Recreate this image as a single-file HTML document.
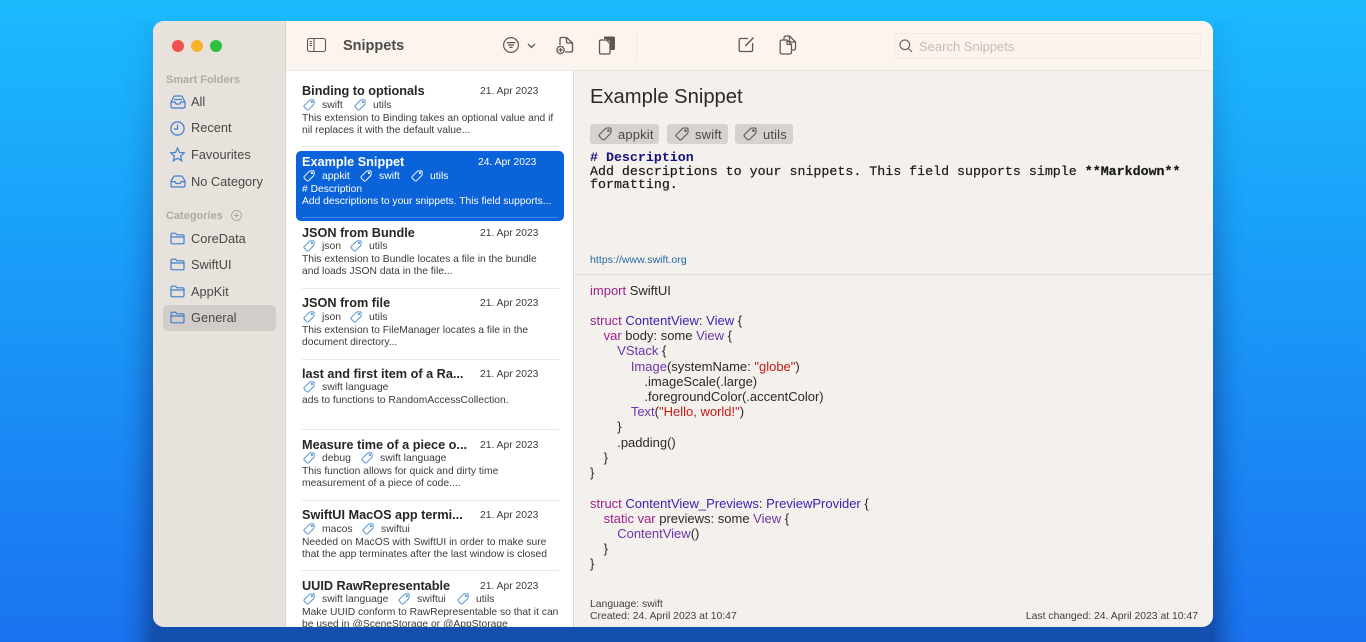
<!DOCTYPE html>
<html><head><meta charset="utf-8"><style>
*{box-sizing:border-box}
html,body{margin:0;padding:0;width:1366px;height:642px;overflow:hidden}
body{position:relative;background:linear-gradient(180deg,#1bbafd 0%,#1a9af8 45%,#1a72f0 100%);font-family:"Liberation Sans",sans-serif;color:#2b2b2b}
.t{position:absolute;white-space:nowrap;line-height:1}
#w{position:absolute;left:153px;top:21px;width:1060px;height:606px;border-radius:11px;overflow:hidden;background:#f4f0ec}
.sd{position:absolute;top:21px;height:621px;width:32px;-webkit-mask-image:linear-gradient(180deg,rgba(0,0,0,.1) 0,rgba(0,0,0,.6) 45%,#000 100%);mask-image:linear-gradient(180deg,rgba(0,0,0,.1) 0,rgba(0,0,0,.6) 45%,#000 100%)}
svg{position:absolute;overflow:visible}
#side{position:absolute;left:0;top:0;width:133px;height:606px;background:#e7e2dc;border-right:1px solid #d8d4cf}
#bar{position:absolute;left:133px;top:0;width:927px;height:49.5px;background:#fcf4ef;border-bottom:1px solid #e9e5e1}
#list{position:absolute;left:133px;top:50px;width:288px;height:556px;background:#fff;border-right:1px solid #dcd8d4;overflow:hidden}
.s{font-size:12.8px;color:#4a4744}
.h{font-size:11px;font-weight:bold;color:#aeaaa5}
.i{fill:none;stroke:#3f7fd0;stroke-width:1.2}
.ti{font-size:12.7px;font-weight:bold;color:#262626}
.da{font-size:10.3px;color:#3b3b3b;top:16px}
.ta{font-size:10.4px;color:#3d3d3d;top:29.5px}
.de{font-size:10.3px;color:#3b3b3b}
.d1{top:42.5px}.d2{top:54.7px}
.ln{position:absolute;left:16px;width:257px;height:1px;background:#e8e8e8}
.tg{fill:none;stroke:#4b8ed2;stroke-width:1.1;top:27.5px}
.wh .ti,.wh .da,.wh .ta,.wh .de{color:#fff}
.wh .tg{stroke:#fff}
.c{position:absolute;left:437px;white-space:pre;tab-size:13.6px;font-size:13px;line-height:15.22px;color:#2a2a2a}
.k{color:#9b2393}.y{color:#3a1fb0}.p{color:#6c36a9}.r{color:#c41a16}
.pill{position:absolute;top:103px;height:20px;background:#d6d2ce;border-radius:3px}
.pt{font-size:13px;color:#4a4744;letter-spacing:.15px}
.pi{fill:none;stroke:#555;stroke-width:1.1}
.b{fill:none;stroke:#5c5753;stroke-width:1.3}
.m{position:absolute;left:437px;font-family:"Liberation Mono",monospace;font-size:13.3px;white-space:pre;line-height:1;color:#1a1a1a;-webkit-text-stroke:.2px #1a1a1a}
.f{font-size:10.4px;color:#3f3f3f}
</style></head><body>
<svg width="0" height="0" style="position:absolute"><defs>
<symbol id="tag" viewBox="0 0 14 14"><path d="M1.5 7.5 7 2Q8 1 9 1H12Q13 1 13 2V5Q13 6 12 7L6.5 12.5Q5.5 13.5 4.5 12.5L1.5 9.5Q.5 8.5 1.5 7.5Z"/><circle cx="10.4" cy="3.6" r=".7"/></symbol>
<symbol id="fold" viewBox="0 0 15 13"><path d="M1 3Q1 1.2 2.5 1.2H5.4L7 2.8H12.6Q14 2.8 14 4.2V10.4Q14 11.8 12.6 11.8H2.4Q1 11.8 1 10.4ZM1 5H14"/></symbol>
</defs></svg>
<div style="position:absolute;left:153px;top:620px;width:1060px;height:22px;background:rgba(14,50,120,.55)"></div>
<div class="sd" style="left:1213px;background:linear-gradient(90deg,rgba(14,50,120,.55),rgba(14,50,120,.38) 20%,rgba(14,50,120,.2) 45%,rgba(14,50,120,.07) 70%,rgba(14,50,120,0))"></div>
<div class="sd" style="left:121px;background:linear-gradient(270deg,rgba(14,50,120,.55),rgba(14,50,120,.38) 20%,rgba(14,50,120,.2) 45%,rgba(14,50,120,.07) 70%,rgba(14,50,120,0))"></div>
<div id="w">
<div id="side">
<div style="position:absolute;left:18.5px;top:18.5px;width:12px;height:12px;border-radius:50%;background:#f2504c"></div>
<div style="position:absolute;left:37.5px;top:18.5px;width:12px;height:12px;border-radius:50%;background:#f8b22c"></div>
<div style="position:absolute;left:56.5px;top:18.5px;width:12px;height:12px;border-radius:50%;background:#2fc13e"></div>
<div class="t h" style="left:13px;top:53.5px">Smart Folders</div>
<svg class="i" style="left:17px;top:74px" width="16" height="14" viewBox="0 0 16 14"><path d="M1 7 3.6 2Q4 1 5 1H11Q12 1 12.4 2L15 7V11.4Q15 13 13.4 13H2.6Q1 13 1 11.4ZM1 7H5L6 9H10L11 7H15M4 4.5H12"/></svg>
<div class="t s" style="left:38px;top:74.5px">All</div>
<svg class="i" style="left:17px;top:100px" width="15" height="15" viewBox="0 0 15 15"><circle cx="7.5" cy="7.5" r="6.6"/><path d="M7.5 3.5V8H4"/></svg>
<div class="t s" style="left:38px;top:101px">Recent</div>
<svg class="i" style="left:17px;top:126px" width="15" height="15" viewBox="0 0 15 15"><path d="M7.5 1 9.4 5.4 14.2 5.8 10.6 9 11.7 13.8 7.5 11.2 3.3 13.8 4.4 9 .8 5.8 5.6 5.4Z"/></svg>
<div class="t s" style="left:38px;top:127.5px">Favourites</div>
<svg class="i" style="left:17px;top:154px" width="16" height="13" viewBox="0 0 16 13"><path d="M1 6 3.6 1.8Q4 1 5 1H11Q12 1 12.4 1.8L15 6V10.4Q15 12 13.4 12H2.6Q1 12 1 10.4ZM1 6.6H5L6 8.5H10L11 6.6H15"/></svg>
<div class="t s" style="left:38px;top:154.5px">No Category</div>
<div class="t h" style="left:13px;top:189.5px">Categories</div>
<svg style="left:78px;top:189px;fill:none;stroke:#aeaaa5;stroke-width:1" width="11" height="11" viewBox="0 0 11 11"><circle cx="5.5" cy="5.5" r="5"/><path d="M5.5 3V8M3 5.5H8"/></svg>
<svg class="i" style="left:17px;top:211px" width="15" height="13"><use href="#fold"/></svg>
<div class="t s" style="left:38px;top:211.5px">CoreData</div>
<svg class="i" style="left:17px;top:237px" width="15" height="13"><use href="#fold"/></svg>
<div class="t s" style="left:38px;top:238px">SwiftUI</div>
<svg class="i" style="left:17px;top:264px" width="15" height="13"><use href="#fold"/></svg>
<div class="t s" style="left:38px;top:264.5px">AppKit</div>
<div style="position:absolute;left:9.5px;top:284px;width:113.5px;height:26px;border-radius:5px;background:#d2cdc8"></div>
<svg class="i" style="left:17px;top:290px" width="15" height="13"><use href="#fold"/></svg>
<div class="t s" style="left:38px;top:291px">General</div>
</div>

<div id="bar">
<svg class="b" style="left:21px;top:17px;stroke-width:1.1" width="19" height="14" viewBox="0 0 19 14"><rect x=".5" y=".5" width="18" height="13" rx="2"/><path d="M7 .5V13.5M2.5 3.5H5M2.5 5.5H5M2.5 7.5H5"/></svg>
<div class="t" style="left:57px;top:17.5px;font-size:14.5px;font-weight:bold;color:#4e4a47">Snippets</div>
<svg class="b" style="left:217px;top:16px;stroke-width:1.2" width="16" height="16" viewBox="0 0 16 16"><circle cx="8" cy="8" r="7.4"/><path d="M3.8 5.6H12.2M5 8H11M6.4 10.4H9.6"/></svg>
<svg class="b" style="left:241px;top:21.5px" width="9" height="6" viewBox="0 0 9 6"><path d="M1 1 4.5 4.5 8 1"/></svg>
<svg class="b" style="left:270px;top:15px;stroke-width:1.3" width="18" height="19" viewBox="0 0 18 19"><path d="M4 9V3Q4 1.5 5.5 1.5H10.5L16.5 7V14.5Q16.5 16 15 16H9M10.5 1.5V5.5Q10.5 7 12 7H16.5"/><circle cx="4.5" cy="14" r="3.6"/><path d="M4.5 12V16M2.5 14H6.5"/></svg>
<svg style="left:312px;top:14px" width="18" height="20" viewBox="0 0 18 20"><path d="M6 1.5H15.4Q17 1.5 17 3V13.5Q17 15 15.5 15H12V6.5L8 4H6Z" fill="#5c5753"/><path d="M3 5H8.5L12 8.5V17.4Q12 19 10.4 19H3Q1.5 19 1.5 17.4V6.5Q1.5 5 3 5Z" fill="#fcf4ef" stroke="#5c5753" stroke-width="1.3"/></svg>
<div style="position:absolute;left:350px;top:11px;width:1px;height:27px;background:#efe9e4"></div>
<svg class="b" style="left:452px;top:15px" width="18" height="17" viewBox="0 0 18 17"><path d="M10 2.5H3Q1.2 2.5 1.2 4V14Q1.2 15.5 3 15.5H13Q14.6 15.5 14.6 14V7"/><path d="M7.5 10 15.5 1.5" stroke-width="1.4"/></svg>
<svg class="b" style="left:493px;top:14px;stroke-width:1.25" width="18" height="20" viewBox="0 0 18 20"><path d="M5 5V3Q5 1 7 1H10.5L16.5 7V13Q16.5 15 14.5 15H12.5M10.5 1V5.5Q10.5 7 12 7H16.5"/><path d="M3 5H8L12.5 9.5V17Q12.5 19 10.5 19H3Q1.2 19 1.2 17V7Q1.2 5 3 5ZM8 5V8.2Q8 9.5 9.3 9.5H12.5"/></svg>
<div style="position:absolute;left:608px;top:11.5px;width:307px;height:26px;border:1px solid #f0e9e4;border-radius:4px;background:#fbf3ee"></div>
<svg style="left:613px;top:17.5px;fill:none;stroke:#6e6a67;stroke-width:1.2" width="14" height="14" viewBox="0 0 14 14"><circle cx="5.8" cy="5.8" r="4.8"/><path d="M9.4 9.4 13 13"/></svg>
<div class="t" style="left:633px;top:19px;font-size:13px;color:#c2bdb9">Search Snippets</div>
</div>

<div id="list">
<div style="position:absolute;left:10px;top:79.5px;width:268px;height:70.5px;background:#0a63d8;border-radius:5px"></div>
<div class="ln" style="top:75px"></div>
<div class="ln" style="top:217px"></div><div class="ln" style="top:287.5px"></div><div class="ln" style="top:358px"></div><div class="ln" style="top:428.5px"></div><div class="ln" style="top:499px"></div>
<div class="ln" style="top:146px;left:16px;width:256px;background:#3d85e4"></div>

<div style="position:absolute;left:0;top:0;width:288px;height:71px">
<div class="t ti" style="left:16px;top:14px">Binding to optionals</div><div class="t da" style="left:194px">21. Apr 2023</div>
<svg class="tg" style="left:17px" width="12" height="12"><use href="#tag"/></svg><div class="t ta" style="left:36px">swift</div>
<svg class="tg" style="left:68px" width="12" height="12"><use href="#tag"/></svg><div class="t ta" style="left:87px">utils</div>
<div class="t de d1" style="left:16px">This extension to Binding takes an optional value and if</div><div class="t de d2" style="left:16px">nil replaces it with the default value...</div>
</div>
<div class="wh" style="position:absolute;left:0;top:71px;width:288px;height:71px">
<div class="t ti" style="left:16px;top:13.5px">Example Snippet</div><div class="t da" style="left:192px">24. Apr 2023</div>
<svg class="tg" style="left:17px" width="12" height="12"><use href="#tag"/></svg><div class="t ta" style="left:36px">appkit</div>
<svg class="tg" style="left:74px" width="12" height="12"><use href="#tag"/></svg><div class="t ta" style="left:93px">swift</div>
<svg class="tg" style="left:125px" width="12" height="12"><use href="#tag"/></svg><div class="t ta" style="left:144px">utils</div>
<div class="t de d1" style="left:16px"># Description</div><div class="t de d2" style="left:16px">Add descriptions to your snippets. This field supports...</div>
</div>
<div style="position:absolute;left:0;top:141.5px;width:288px;height:71px">
<div class="t ti" style="left:16px;top:14px">JSON from Bundle</div><div class="t da" style="left:194px">21. Apr 2023</div>
<svg class="tg" style="left:17px" width="12" height="12"><use href="#tag"/></svg><div class="t ta" style="left:36px">json</div>
<svg class="tg" style="left:64px" width="12" height="12"><use href="#tag"/></svg><div class="t ta" style="left:83px">utils</div>
<div class="t de d1" style="left:16px">This extension to Bundle locates a file in the bundle</div><div class="t de d2" style="left:16px">and loads JSON data in the file...</div>
</div>
<div style="position:absolute;left:0;top:212px;width:288px;height:71px">
<div class="t ti" style="left:16px;top:14px">JSON from file</div><div class="t da" style="left:194px">21. Apr 2023</div>
<svg class="tg" style="left:17px" width="12" height="12"><use href="#tag"/></svg><div class="t ta" style="left:36px">json</div>
<svg class="tg" style="left:64px" width="12" height="12"><use href="#tag"/></svg><div class="t ta" style="left:83px">utils</div>
<div class="t de d1" style="left:16px">This extension to FileManager locates a file in the</div><div class="t de d2" style="left:16px">document directory...</div>
</div>
<div style="position:absolute;left:0;top:282.5px;width:288px;height:71px">
<div class="t ti" style="left:16px;top:14px">last and first item of a Ra...</div><div class="t da" style="left:194px">21. Apr 2023</div>
<svg class="tg" style="left:17px" width="12" height="12"><use href="#tag"/></svg><div class="t ta" style="left:36px">swift language</div>
<div class="t de d1" style="left:16px">ads to functions to RandomAccessCollection.</div>
</div>
<div style="position:absolute;left:0;top:353.5px;width:288px;height:71px">
<div class="t ti" style="left:16px;top:14px">Measure time of a piece o...</div><div class="t da" style="left:194px">21. Apr 2023</div>
<svg class="tg" style="left:17px" width="12" height="12"><use href="#tag"/></svg><div class="t ta" style="left:36px">debug</div>
<svg class="tg" style="left:75px" width="12" height="12"><use href="#tag"/></svg><div class="t ta" style="left:94px">swift language</div>
<div class="t de d1" style="left:16px">This function allows for quick and dirty time</div><div class="t de d2" style="left:16px">measurement of a piece of code....</div>
</div>
<div style="position:absolute;left:0;top:424px;width:288px;height:71px">
<div class="t ti" style="left:16px;top:14px">SwiftUI MacOS app termi...</div><div class="t da" style="left:194px">21. Apr 2023</div>
<svg class="tg" style="left:17px" width="12" height="12"><use href="#tag"/></svg><div class="t ta" style="left:36px">macos</div>
<svg class="tg" style="left:76px" width="12" height="12"><use href="#tag"/></svg><div class="t ta" style="left:95px">swiftui</div>
<div class="t de d1" style="left:16px">Needed on MacOS with SwiftUI in order to make sure</div><div class="t de d2" style="left:16px">that the app terminates after the last window is closed</div>
</div>
<div style="position:absolute;left:0;top:494.5px;width:288px;height:71px">
<div class="t ti" style="left:16px;top:14px">UUID RawRepresentable</div><div class="t da" style="left:194px">21. Apr 2023</div>
<svg class="tg" style="left:17px" width="12" height="12"><use href="#tag"/></svg><div class="t ta" style="left:36px">swift language</div>
<svg class="tg" style="left:112px" width="12" height="12"><use href="#tag"/></svg><div class="t ta" style="left:131px">swiftui</div>
<svg class="tg" style="left:171px" width="12" height="12"><use href="#tag"/></svg><div class="t ta" style="left:190px">utils</div>
<div class="t de d1" style="left:16px">Make UUID conform to RawRepresentable so that it can</div><div class="t de d2" style="left:16px">be used in @SceneStorage or @AppStorage</div>
</div>
</div>

<div class="t" style="left:437px;top:66px;font-size:20.2px;color:#2a2a2a">Example Snippet</div>
<div class="pill" style="left:437px;width:69px"></div><svg class="pi" style="left:445px;top:106px" width="14" height="14"><use href="#tag"/></svg><div class="t pt" style="left:465px;top:106.5px">appkit</div>
<div class="pill" style="left:514px;width:61px"></div><svg class="pi" style="left:522px;top:106px" width="14" height="14"><use href="#tag"/></svg><div class="t pt" style="left:542px;top:106.5px">swift</div>
<div class="pill" style="left:582px;width:58px"></div><svg class="pi" style="left:590px;top:106px" width="14" height="14"><use href="#tag"/></svg><div class="t pt" style="left:610px;top:106.5px">utils</div>
<div class="m" style="top:130px;color:#12127f;font-weight:bold;-webkit-text-stroke:0"># Description</div>
<div class="m" style="top:143.5px">Add descriptions to your snippets. This field supports simple <b>**Markdown**</b></div>
<div class="m" style="top:157px">formatting.</div>
<div class="t" style="left:437px;top:233.5px;font-size:10.5px;color:#2367a8;letter-spacing:.05px">https://www.swift.org</div>
<div style="position:absolute;left:421px;top:252.5px;width:639px;height:1px;background:#e2deda"></div>
<div class="c" style="top:261.5px"><span class="k">import</span> SwiftUI

<span class="k">struct</span> <span class="y">ContentView</span>: <span class="y">View</span> {
	<span class="k">var</span> body: some <span class="p">View</span> {
		<span class="p">VStack</span> {
			<span class="p">Image</span>(systemName: <span class="r">"globe"</span>)
				.imageScale(.large)
				.foregroundColor(.accentColor)
			<span class="p">Text</span>(<span class="r">"Hello, world!"</span>)
		}
		.padding()
	}
}

<span class="k">struct</span> <span class="y">ContentView_Previews</span>: <span class="y">PreviewProvider</span> {
	<span class="k">static var</span> previews: some <span class="p">View</span> {
		<span class="p">ContentView</span>()
	}
}</div>
<div class="t f" style="left:437px;top:579px">Language: swift</div>
<div class="t f" style="left:437px;top:591px">Created: 24. April 2023 at 10:47</div>
<div class="t f" style="right:15px;top:591px">Last changed: 24. April 2023 at 10:47</div>
</div>
</body></html>
